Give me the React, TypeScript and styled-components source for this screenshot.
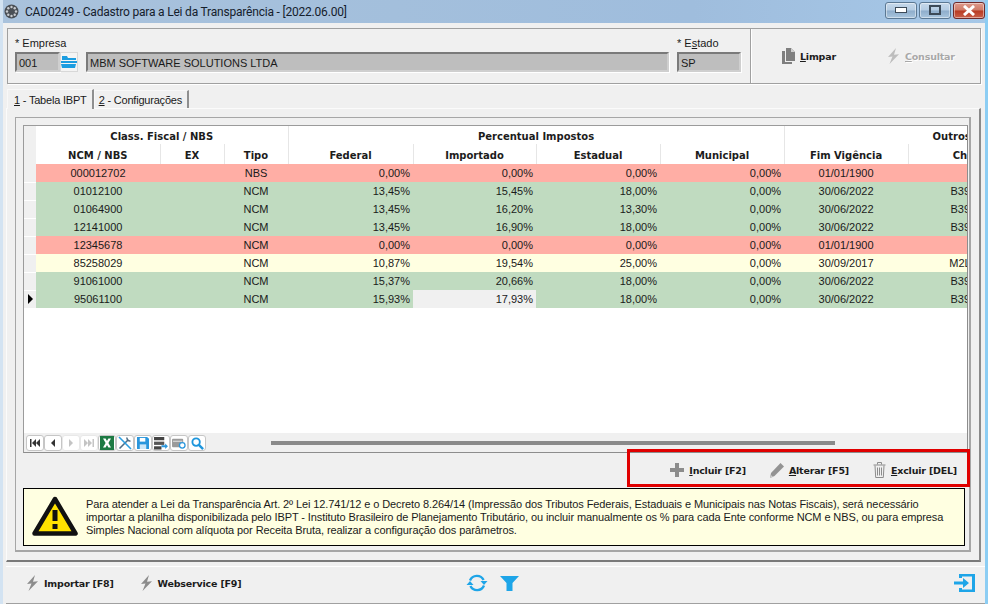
import React from "react";
import styled, { createGlobalStyle } from "styled-components";

const Global = createGlobalStyle`
  html, body { margin: 0; padding: 0; background: #f0f0f0; }
  * { box-sizing: border-box; }
`;

const FONT = `"Liberation Sans", Arial, sans-serif`;
const BOLD = `"DejaVu Sans", Verdana, sans-serif`;

const Window = styled.div`
  width: 988px; height: 604px; overflow: hidden;
  display: flex; flex-direction: column;
  background: #f0f0f0;
  font: 11px ${FONT}; color: #1a1a1a;
  border-left: 3px solid #d3e3f2; border-right: 3px solid #8ccdf3;
`;
const TitleBar = styled.div`
  height: 23px; margin: 0 -3px; flex: none;
  padding: 0 3px 0 4px;
  display: flex; align-items: center; gap: 6px;
  background: linear-gradient(90deg, #a9c2dc 0%, #a3bfdc 40%, #9fbddd 70%, #a6c8e8 100%);
`;
const TitleText = styled.span`
  flex: 1; font: 12px Roboto, sans-serif; letter-spacing: -0.2px; color: #15202c; white-space: nowrap;
`;
const WinControls = styled.div`display: flex; gap: 2px; margin-bottom: 3px;`;
const WinBtn = styled.div<{ $close?: boolean }>`
  width: 32px; height: 17px; border-radius: 3px;
  display: flex; align-items: center; justify-content: center;
  border: 1px solid ${p => (p.$close ? "#6e2a2a" : "#5b7893")};
  box-shadow: inset 0 0 0 1px rgba(255,255,255,.45);
  background: ${p => p.$close
    ? "linear-gradient(180deg,#dd9a8c 0%,#cf7b68 48%,#b83a22 52%,#c9604a 100%)"
    : "linear-gradient(180deg,#c6d8ea 0%,#b3cbe2 48%,#8eadcb 52%,#a9c5de 100%)"};
`;
const Content = styled.div`
  flex: 1; min-height: 0; display: flex; flex-direction: column;
  padding: 5px 4px 0 3px;
`;
const TopGroup = styled.div`
  height: 56px; flex: none; margin-left: 1px;
  display: flex; border: 1px solid #a0a0a0; box-shadow: 1px 1px 0 #fff;
`;
const FilterSection = styled.div`
  width: 743px; padding: 8px 8px 0 7px; display: flex; gap: 8px;
  border-right: 1px solid #a0a0a0;
`;
const CommandSection = styled.div`
  flex: 1; display: flex; align-items: center; padding: 0 0 0 31px; box-shadow: inset 1px 0 0 #fff;
`;
const Field = styled.div<{ $w: number }>`width: ${p => p.$w}px; flex: none;`;
const FieldLabel = styled.div`height: 15px; line-height: 12px; white-space: nowrap;`;
const InputRow = styled.div`display: flex; height: 20px;`;
const ReadInput = styled.div`
  flex: 1; height: 20px; min-width: 0; padding: 2px 1px 0 2px; line-height: 14px;
  background: #bebebe; border: 2px solid; border-color: #7a7a7a #cfcfcf #cfcfcf #7a7a7a;
  box-shadow: 1px 1px 0 #fff; font-size: 11px; white-space: nowrap;
`;
const LookupBtn = styled.div`
  width: 18px; flex: none; display: flex; align-items: center; justify-content: center;
  background: #f4f4f4; border: 1px solid #d8d8d8;
`;
const CmdBtn = styled.div<{ $off?: boolean; $w?: number }>`
  display: inline-flex; align-items: center; gap: 5px;
  width: ${p => (p.$w ? `${p.$w}px` : "auto")}; flex: none;
  font: bold 9.5px ${BOLD}; letter-spacing: -0.2px; white-space: nowrap;
  color: ${p => (p.$off ? "#a8a8a8" : "#1c1c1c")};
  text-shadow: ${p => (p.$off ? "1px 1px 0 #fff" : "none")};
`;
const TabStrip = styled.div`
  height: 24px; flex: none; display: flex; align-items: flex-end; padding-left: 1px;
`;
const Tab = styled.div<{ $on?: boolean }>`
  height: ${p => (p.$on ? 20 : 18)}px; padding: 0 5px 0 ${p => (p.$on ? 6 : 4)}px; display: flex; align-items: center;
  white-space: nowrap; font-size: 11px; letter-spacing: -0.2px;
  background: #f0f0f0; border: 1px solid #f8f8f8; border-bottom: 0;
  border-right: 2px solid #8f8f8f;
  margin-bottom: ${p => (p.$on ? -1 : 0)}px; position: relative;
`;
const TabPanel = styled.div`
  height: 454px; flex: none;
  padding: 8px 8px 9px 8px;
  border: 1px solid #fbfbfb; border-right: 2px solid #8a8a8a; border-bottom: 2px solid #7a7a7a;
`;
const InnerGroup = styled.div`
  height: 435px; padding: 7px 3px 5px 7px;
  display: flex; flex-direction: column;
  border: 1px solid #a6a6a6; border-right: 2px solid #a6a6a6; border-bottom: 2px solid #a6a6a6;
`;
const GridBox = styled.div`
  height: 328px; flex: none; display: flex; flex-direction: column; overflow: hidden; width: 945px;
  border: 1px solid #9b9b9b; background: #fff; border-bottom: 1px solid #8d8d8d; border-right: 1px solid #8d8d8d;
`;
const GridTable = styled.table`
  border-collapse: collapse; table-layout: fixed; width: 1258px; flex: none;
  font-size: 11px;
`;
const GroupHead = styled.th<{ $offset?: number }>`
  height: 18px; padding: 2px 0 0 ${p => p.$offset ?? 0}px; font: bold 10px ${BOLD}; color: #1c1c1c;
  text-align: ${p => (p.$offset ? "left" : "center")};
  border-right: 1px solid #e6e6e6;
`;
const ColHead = styled.th`
  height: 20px; padding: 2px 0 0 0; font: bold 10px ${BOLD}; color: #1c1c1c; text-align: center;
  border-right: 1px solid #e6e6e6;
`;
const Corner = styled.th`padding: 0; background: #f0f0f0;`;
const Indicator = styled.td`
  height: 18px; padding: 0; background: #f0f0f0;
  border-bottom: 1px solid #fff; text-align: center; line-height: 0;
`;
const Row = styled.tr<{ $c: "r" | "g" | "y" }>`
  background: ${p => ({ r: "#ffaea5", g: "#c0dbc0", y: "#ffffe1" }[p.$c])};
`;
const Cell = styled.td<{ $num?: boolean; $sel?: boolean }>`
  height: 18px; padding: 0 ${p => (p.$num ? "3px" : "0")} 0 0; white-space: nowrap;
  text-align: ${p => (p.$num ? "right" : "center")};
  background: ${p => (p.$sel ? "#f0f0f0" : "transparent")};
`;
const GridSpacer = styled.div`flex: 1;`;
const GridFooter = styled.div`
  height: 19px; flex: none; display: flex; align-items: center; background: #f0f0f0; padding: 1px 0 0 2px;
`;
const NavBar = styled.div`display: flex; width: 245px; flex: none;`;
const NavBtn = styled.div<{ $off?: boolean }>`
  width: 18px; height: 16px; display: flex; align-items: center; justify-content: center;
  background: #fff; border-radius: 3px;
  border: 1px solid ${p => (p.$off ? "#e8e8e8" : "#c6c6c6")};
`;
const ScrollTrack = styled.div`width: 564px; height: 4px; background: #8a8a8a; flex: none;`;
const ActionBar = styled.div`
  height: 35px; flex: none; position: relative; display: flex; align-items: center; justify-content: flex-end;
  padding: 0 9px 1px 0; gap: 24px;
`;
const Highlight = styled.div`
  position: absolute; right: -4px; top: -4px; width: 343px; height: 38px;
  border: 3px solid #e00000; pointer-events: none;
`;
const InfoBox = styled.div`
  height: 58px; flex: none; width: 942px; display: flex; align-items: center;
  background: #ffffe1; border: 1px solid #000; padding: 0 0 0 8px; gap: 8px;
`;
const InfoText = styled.div`font-size: 11px; letter-spacing: -0.1px; line-height: 13px; white-space: nowrap; color: #1a1a1a;`;
const Footer = styled.div`
  flex: 1; margin: 4px -4px 0 0; display: grid; grid-template-columns: 440px auto 1fr; align-items: center;
  padding: 0 10px 4px 20px; border-top: 1px solid #fff; border-bottom: 1px solid #a0a0a0;
`;
const FooterLeft = styled.div`display: flex; gap: 26px;`;
const FooterCenter = styled.div`display: flex; gap: 12px; align-items: center;`;
const FooterRight = styled.div`display: flex; justify-content: flex-end;`;

const Bolt = ({ c = "#8c8c8c" }: { c?: string }) => (
  <svg width="13" height="16" viewBox="0 0 13 16"><path d="M9 0 L1 9 L5.5 8.6 L2.5 16 L12 6.2 L7 6.8 Z" fill={c} /></svg>
);
const Copy = () => (
  <svg width="13" height="16" viewBox="0 0 13 16"><path d="M4 0h5l4 4v9H4Z" fill="#7f7f7f" /><path d="M0 3h3v11h7v2H0Z" fill="#7f7f7f" /><path d="M9 0l4 4H9Z" fill="#cfcfcf" /></svg>
);
const Plus = () => (
  <svg width="14" height="14" viewBox="0 0 14 14"><path d="M5 0h4v5h5v4H9v5H5V9H0V5h5Z" fill="#8c8c8c" /></svg>
);
const Pencil = () => (
  <svg width="14" height="15" viewBox="0 0 14 15"><path d="M10.5 0 14 3.5 4.5 13 0 15l1-5Z" fill="#939393" /><path d="M0 15l1-3 2 2Z" fill="#cfcfcf" /></svg>
);
const Trash = () => (
  <svg width="13" height="16" viewBox="0 0 13 16" fill="none" stroke="#8c8c8c"><path d="M.5 3h12M4.5 2.5v-2h4v2M2 3.5l.7 12h7.6l.7-12M4.5 5.5v8M6.5 5.5v8M8.5 5.5v8" /></svg>
);
const Folder = () => (
  <svg width="16" height="14" viewBox="0 0 16 14"><path d="M1 1h5l1 2h8v2H1Z" fill="#1c9de0" /><path d="M0 6h16v2H0Z" fill="#1c9de0" /><path d="M0 9h15l-1 4H1Z" fill="#1c9de0" /></svg>
);
const Refresh = () => (
  <svg width="22" height="20" viewBox="0 0 22 20" fill="none" stroke="#1ea5e8" strokeWidth="2.4">
    <path d="M4 7.5A7.5 7.5 0 0 1 17.6 7" /><path d="M18 12.5A7.5 7.5 0 0 1 4.4 13" />
    <path d="M14.5 8h7L18 12Z" fill="#1ea5e8" stroke="none" /><path d="M.5 12h7L4 8Z" fill="#1ea5e8" stroke="none" />
  </svg>
);
const Funnel = () => (
  <svg width="19" height="15" viewBox="0 0 19 15"><path d="M0 0h19l-6.5 7v8h-6V7Z" fill="#1ea5e8" /></svg>
);
const ExitIcon = () => (
  <svg width="21" height="18" viewBox="0 0 21 18" fill="#1ea5e8"><path d="M5 0h16v18H5v-4h3v1.5h10v-13H8V4H5Z" /><path d="M0 7.5h9V4l6 5-6 5v-3.5H0Z" /></svg>
);
const Warning = () => (
  <svg width="46" height="44" viewBox="0 0 46 44"><path d="M23 4 L43.5 38.5 H2.5 Z" fill="#ffe100" stroke="#111" strokeWidth="4.5" strokeLinejoin="round" /><rect x="20.5" y="15" width="5" height="11" fill="#111" /><rect x="20.5" y="29" width="5" height="5" fill="#111" /></svg>
);
const Wheel = () => (
  <svg width="15" height="15" viewBox="0 0 15 15"><circle cx="7.5" cy="7.5" r="7" fill="#4a4f55" /><g fill="#c9ccd0"><circle cx="7.5" cy="3" r="1.2" /><circle cx="7.5" cy="12" r="1.2" /><circle cx="3" cy="7.5" r="1.2" /><circle cx="12" cy="7.5" r="1.2" /><circle cx="4.3" cy="4.3" r="1.2" /><circle cx="10.7" cy="4.3" r="1.2" /><circle cx="4.3" cy="10.7" r="1.2" /><circle cx="10.7" cy="10.7" r="1.2" /></g></svg>
);
const NavIcon = ({ kind, off }: { kind: string; off?: boolean }) => {
  const c = off ? "#c4c4c4" : "#333";
  const d: Record<string, string> = {
    first: "M1 2h1.5v8H1ZM7 2v8L3 6ZM11 2v8L7 6Z",
    prev: "M8 2v8L4 6Z",
    next: "M4 2v8l4-4Z",
    last: "M1 2v8l4-4ZM5 2v8l4-4ZM9.5 2H11v8H9.5Z",
  };
  return <svg width="12" height="12" viewBox="0 0 12 12"><path d={d[kind]} fill={c} /></svg>;
};
const Excel = () => (
  <svg width="14" height="14" viewBox="0 0 14 14"><rect width="14" height="14" fill="#1d7a43" /><path d="M3 2.5h2.6L7 5l1.4-2.5H11L8.4 7 11 11.5H8.4L7 9l-1.4 2.5H3L5.6 7Z" fill="#fff" /></svg>
);
const Tools = () => (
  <svg width="14" height="14" viewBox="0 0 14 14" fill="none"><path d="M1.5 12.5 10 4" stroke="#4f6e86" strokeWidth="1.6" /><path d="M9 1.5a3 3 0 0 0 3.5 3.5" stroke="#4f6e86" strokeWidth="1.6" /><path d="M1 1l12 12" stroke="#2b9de0" strokeWidth="1.6" /></svg>
);
const Save = () => (
  <svg width="12" height="12" viewBox="0 0 13 13"><path d="M0 0h11l2 2v11H0Z" fill="#2a96dc" /><rect x="3" y="1" width="6" height="4" fill="#fff" /><rect x="3" y="8" width="7" height="5" fill="#cfe7f7" /></svg>
);
const Records = () => (
  <svg width="14" height="13" viewBox="0 0 15 14"><rect width="11" height="3.5" fill="#444" /><rect y="5" width="11" height="3.5" fill="#555" /><rect y="10" width="8" height="3.5" fill="#444" /><path d="M8 9h4V7l3 3-3 3v-2H8Z" fill="#2a96dc" /></svg>
);
const Filters = () => (
  <svg width="14" height="13" viewBox="0 0 15 14"><rect y="2" width="12" height="9" rx="1" fill="#9a9a9a" /><rect x="1" y="4" width="10" height="1.2" fill="#ddd" /><circle cx="11" cy="9" r="3" fill="#fff" stroke="#2a96dc" strokeWidth="1.4" /></svg>
);
const Search = () => (
  <svg width="13" height="13" viewBox="0 0 14 14" fill="none" stroke="#1e96dc"><circle cx="5.5" cy="5.5" r="4" strokeWidth="2" /><path d="M8.5 8.5 13 13" strokeWidth="2.6" /></svg>
);

type R = { c: "r" | "g" | "y"; code: string; tipo: string; v: string[]; fim: string; ch: string };
const rows: R[] = [
  { c: "r", code: "000012702", tipo: "NBS", v: ["0,00%", "0,00%", "0,00%", "0,00%"], fim: "01/01/1900", ch: "" },
  { c: "g", code: "01012100", tipo: "NCM", v: ["13,45%", "15,45%", "18,00%", "0,00%"], fim: "30/06/2022", ch: "B39FA1" },
  { c: "g", code: "01064900", tipo: "NCM", v: ["13,45%", "16,20%", "13,30%", "0,00%"], fim: "30/06/2022", ch: "B39FA1" },
  { c: "g", code: "12141000", tipo: "NCM", v: ["13,45%", "16,90%", "18,00%", "0,00%"], fim: "30/06/2022", ch: "B39FA1" },
  { c: "r", code: "12345678", tipo: "NCM", v: ["0,00%", "0,00%", "0,00%", "0,00%"], fim: "01/01/1900", ch: "" },
  { c: "y", code: "85258029", tipo: "NCM", v: ["10,87%", "19,54%", "25,00%", "0,00%"], fim: "30/09/2017", ch: "M2LC45" },
  { c: "g", code: "91061000", tipo: "NCM", v: ["15,37%", "20,66%", "18,00%", "0,00%"], fim: "30/06/2022", ch: "B39FA1" },
  { c: "g", code: "95061100", tipo: "NCM", v: ["15,93%", "17,93%", "18,00%", "0,00%"], fim: "30/06/2022", ch: "B39FA1" },
];
const widths = [12, 124, 64, 64, 125, 123, 124, 124, 124, 124, 250];

export default function App() {
  return (
    <Window>
      <Global />
      <TitleBar>
        <Wheel />
        <TitleText>CAD0249 - Cadastro para a Lei da Transparência - [2022.06.00]</TitleText>
        <WinControls>
          <WinBtn><svg width="12" height="6"><rect x=".5" y=".5" width="11" height="5" fill="#fff" stroke="#3c4a58" /></svg></WinBtn>
          <WinBtn><svg width="12" height="10"><rect x="1" y="1" width="10" height="8" fill="none" stroke="#3c4a58" strokeWidth="2" /></svg></WinBtn>
          <WinBtn $close><svg width="14" height="11"><path d="M2 1l10 9M12 1 2 10" stroke="#fff" strokeWidth="3" /></svg></WinBtn>
        </WinControls>
      </TitleBar>
      <Content>
        <TopGroup>
          <FilterSection>
            <Field $w={63}>
              <FieldLabel>* Empresa</FieldLabel>
              <InputRow><ReadInput>001</ReadInput><LookupBtn><Folder /></LookupBtn></InputRow>
            </Field>
            <Field $w={583}>
              <FieldLabel>&nbsp;</FieldLabel>
              <InputRow><ReadInput>MBM SOFTWARE SOLUTIONS LTDA</ReadInput></InputRow>
            </Field>
            <Field $w={64}>
              <FieldLabel>* E<u>s</u>tado</FieldLabel>
              <InputRow><ReadInput>SP</ReadInput></InputRow>
            </Field>
          </FilterSection>
          <CommandSection>
            <CmdBtn $w={105}><Copy /><span><u>L</u>impar</span></CmdBtn>
            <CmdBtn $off><Bolt c="#bdbdbd" /><span><u>C</u>onsultar</span></CmdBtn>
          </CommandSection>
        </TopGroup>
        <TabStrip>
          <Tab $on><span><u>1</u> - Tabela IBPT</span></Tab>
          <Tab><span><u>2</u> - Configurações</span></Tab>
        </TabStrip>
        <TabPanel>
          <InnerGroup>
            <GridBox>
              <GridTable>
                <colgroup>{widths.map((w, i) => <col key={i} style={{ width: w }} />)}</colgroup>
                <thead>
                  <tr>
                    <Corner rowSpan={2} />
                    <GroupHead colSpan={3}>Class. Fiscal / NBS</GroupHead>
                    <GroupHead colSpan={4}>Percentual Impostos</GroupHead>
                    <GroupHead colSpan={3} $offset={148}>Outros</GroupHead>
                  </tr>
                  <tr>
                    {["NCM / NBS", "EX", "Tipo", "Federal", "Importado", "Estadual", "Municipal", "Fim Vigência", "Chave", ""].map((h, i) => (
                      <ColHead key={i}>{h}</ColHead>
                    ))}
                  </tr>
                </thead>
                <tbody>
                  {rows.map((r, i) => (
                    <Row key={r.code} $c={r.c}>
                      <Indicator>{i === 7 && <svg width="7" height="10"><path d="M1 0l5 5-5 5Z" fill="#000" /></svg>}</Indicator>
                      <Cell>{r.code}</Cell>
                      <Cell />
                      <Cell>{r.tipo}</Cell>
                      {r.v.map((x, j) => <Cell key={j} $num $sel={i === 7 && j === 1}>{x}</Cell>)}
                      <Cell>{r.fim}</Cell>
                      <Cell>{r.ch}</Cell>
                      <Cell />
                    </Row>
                  ))}
                </tbody>
              </GridTable>
              <GridSpacer />
              <GridFooter>
                <NavBar>
                  <NavBtn><NavIcon kind="first" /></NavBtn>
                  <NavBtn><NavIcon kind="prev" /></NavBtn>
                  <NavBtn $off><NavIcon kind="next" off /></NavBtn>
                  <NavBtn $off><NavIcon kind="last" off /></NavBtn>
                  <NavBtn><Excel /></NavBtn>
                  <NavBtn><Tools /></NavBtn>
                  <NavBtn><Save /></NavBtn>
                  <NavBtn><Records /></NavBtn>
                  <NavBtn><Filters /></NavBtn>
                  <NavBtn><Search /></NavBtn>
                </NavBar>
                <ScrollTrack />
              </GridFooter>
            </GridBox>
            <ActionBar>
              <CmdBtn><Plus /><span><u>I</u>ncluir [F2]</span></CmdBtn>
              <CmdBtn><Pencil /><span><u>A</u>lterar [F5]</span></CmdBtn>
              <CmdBtn><Trash /><span><u>E</u>xcluir [DEL]</span></CmdBtn>
              <Highlight />
            </ActionBar>
            <InfoBox>
              <Warning />
              <InfoText>
                Para atender a Lei da Transparência Art. 2º Lei 12.741/12 e o Decreto 8.264/14 (Impressão dos Tributos Federais, Estaduais e Municipais nas Notas Fiscais), será necessário<br />
                importar a planilha disponibilizada pelo IBPT - Instituto Brasileiro de Planejamento Tributário, ou incluir manualmente os % para cada Ente conforme NCM e NBS, ou para empresa<br />
                Simples Nacional com alíquota por Receita Bruta, realizar a configuração dos parâmetros.
              </InfoText>
            </InfoBox>
          </InnerGroup>
        </TabPanel>
        <Footer>
          <FooterLeft>
            <CmdBtn><Bolt /><span>Importar [F8]</span></CmdBtn>
            <CmdBtn><Bolt /><span>Webservice [F9]</span></CmdBtn>
          </FooterLeft>
          <FooterCenter><Refresh /><Funnel /></FooterCenter>
          <FooterRight><ExitIcon /></FooterRight>
        </Footer>
      </Content>
    </Window>
  );
}
